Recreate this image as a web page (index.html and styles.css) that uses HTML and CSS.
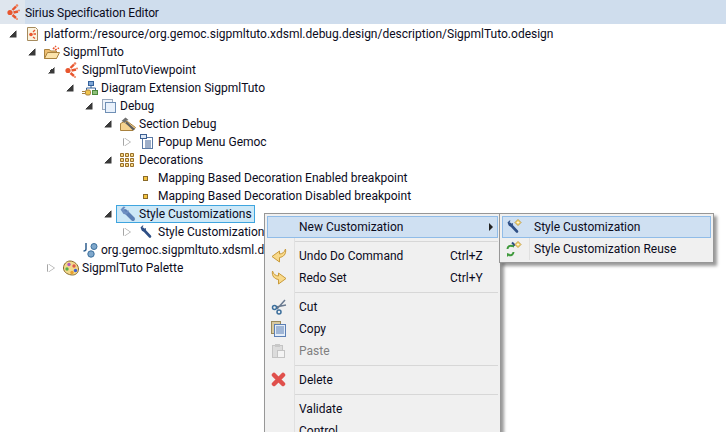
FILE: index.html
```html
<!DOCTYPE html>
<html lang="en">

<head>
    <meta charset="UTF-8">
    <meta name="viewport" content="width=device-width, initial-scale=1.0">
    <title>Sirius Specification Editor</title>
    <link rel="stylesheet" href="styles.css">
</head>
<body>
    <svg class="defs" width="0" height="0">
        <defs>
            <g id="sirius">
                <circle cx="5" cy="8.500" r="2.600" fill="#e8562e"/>
                <path d="M7.500 6l3.500-3.500M8.500 8.500l4.500-1M7.500 11l3.500 3" stroke="#e8562e" stroke-width="2.400" fill="none"/>
                <circle cx="12" cy="1.500" r="1.300" fill="#f0805c"/>
                <circle cx="14" cy="6.500" r="1" fill="#f0805c"/>
                <circle cx="12" cy="15" r="1" fill="#f0805c"/>
            </g>
            <g id="wrench">
                <path d="M4 5l7 7.500" stroke="#2f4f85" stroke-width="2.600" stroke-linecap="round"/>
                <path d="M1.500 3.500l2-2 1 0-1 2 1.500 1.500 2-1v1.500l-2 2-2-.5z" fill="#2f4f85"/>
            </g>
            <g id="sparkle">
                <path d="M12 .5l3 3-3 3-3-3z" fill="#f8dc80" stroke="#b98a1e" stroke-width=".8"/>
                <circle cx="12" cy="3.500" r=".8" fill="#fff"/>
            </g>
        </defs>
    </svg>

    <header class="titleBar">
        <span class="titleTab">
            <svg width="16" height="16" viewBox="0 0 16 16"><use href="#sirius"/></svg>
        </span>
        <span class="titleText">Sirius Specification Editor</span>
    </header>

    <main class="tree">
        <div class="row depth0">
            <span class="twist open"></span>
            <svg class="icon" width="16" height="16" viewBox="0 0 16 16">
                <path d="M2.500 1.500h8l2 2v11h-10z" fill="#fbf3df" stroke="#a58a5c"/>
                <circle cx="6" cy="8.500" r="1.800" fill="#e8562e"/>
                <path d="M8 6l2-2M8.500 8h2.500M8 11l2 1.500" stroke="#e8562e" stroke-width="1.300"/>
            </svg>
            <span class="label">platform:/resource/org.gemoc.sigpmltuto.xdsml.debug.design/description/SigpmlTuto.odesign</span>
        </div>
        <div class="row depth1">
            <span class="twist open"></span>
            <svg class="icon" width="16" height="16" viewBox="0 0 16 16">
                <path d="M.5 5.500h5l1 1.500h6v7.500H.5z" fill="#eebf72" stroke="#a9823f"/>
                <path d="M.5 14.500l3-6h12l-3 6z" fill="#fbe3ab" stroke="#a9823f"/>
                <path d="M9 5l3-3M11 6l4-2" stroke="#e8562e" stroke-width="1.600" stroke-dasharray="2 1"/>
            </svg>
            <span class="label">SigpmlTuto</span>
        </div>
        <div class="row depth2">
            <span class="twist open"></span>
            <svg class="icon" width="16" height="16" viewBox="0 0 16 16"><use href="#sirius"/></svg>
            <span class="label">SigpmlTutoViewpoint</span>
        </div>
        <div class="row depth3">
            <span class="twist open"></span>
            <svg class="icon" width="16" height="16" viewBox="0 0 16 16">
                <rect x="6.500" y="1.500" width="5" height="4" fill="#7fa6d6" stroke="#35629c"/>
                <path d="M9 5.500v2.500M4.500 10V8h9v2" stroke="#35629c" fill="none"/>
                <rect x="10.500" y="10.500" width="5" height="4" fill="#8ec07a" stroke="#4d8a3c"/>
                <rect x="3.500" y="10" width="5" height="5" rx="1.500" fill="#f0c44c" stroke="#a9823f"/>
                <path d="M0 11.500h3.500M0 13.500h3.500" stroke="#a9823f"/>
            </svg>
            <span class="label">Diagram Extension SigpmlTuto</span>
        </div>
        <div class="row depth4">
            <span class="twist open"></span>
            <svg class="icon" width="16" height="16" viewBox="0 0 16 16">
                <rect x="1.500" y="1.500" width="10" height="10" fill="#eef3fa" stroke="#9aa9bd"/>
                <rect x="4.500" y="4.500" width="10" height="10" fill="#e9f1fb" stroke="#6f8fb5"/>
            </svg>
            <span class="label">Debug</span>
        </div>
        <div class="row depth5">
            <span class="twist open"></span>
            <svg class="icon" width="16" height="16" viewBox="0 0 16 16">
                <path d="M.5 14.500V7.500l4-2h3l8 6-2.500 3z" fill="#f5d28f" stroke="#a9823f"/>
                <path d="M5 7l4 3.500 4 4 2-1.500-4.500-4L7 5.500z" fill="#5f5f5f"/>
                <path d="M1.500 5l4-3.500 3 2.500-2.500 1-1.500 2-1-1z" fill="#6f6f6f"/>
            </svg>
            <span class="label">Section Debug</span>
        </div>
        <div class="row depth6">
            <span class="twist closed"></span>
            <svg class="icon" width="16" height="16" viewBox="0 0 16 16">
                <rect x="3.500" y="3.500" width="10" height="11" fill="#fff" stroke="#5b7aa5"/>
                <rect x="1.500" y=".5" width="6" height="4" fill="#dce7f5" stroke="#3c5f92"/>
                <path d="M6 7h6M6 9h6M6 11h6M6 13h6" stroke="#3c5f92"/>
            </svg>
            <span class="label">Popup Menu Gemoc</span>
        </div>
        <div class="row depth5">
            <span class="twist open"></span>
            <svg class="icon" width="16" height="16" viewBox="0 0 16 16">
                <path d="M.5 1.500h3v3h-3zM5.500 1.500h3v3h-3zM10.500 1.500h3v3h-3zM.5 6.500h3v3h-3zM5.500 6.500h3v3h-3zM10.500 6.500h3v3h-3zM.5 11.500h3v3h-3zM5.500 11.500h3v3h-3zM10.500 11.500h3v3h-3z" fill="#f6d784" stroke="#99702a"/>
            </svg>
            <span class="label">Decorations</span>
        </div>
        <div class="row depth6">
            <span class="twist"></span>
            <svg class="icon" width="16" height="16" viewBox="0 0 16 16"><rect x="4.500" y="6.500" width="4" height="4" fill="#f4c542" stroke="#8a6a2a"/></svg>
            <span class="label">Mapping Based Decoration Enabled breakpoint</span>
        </div>
        <div class="row depth6">
            <span class="twist"></span>
            <svg class="icon" width="16" height="16" viewBox="0 0 16 16"><rect x="4.500" y="6.500" width="4" height="4" fill="#f4c542" stroke="#8a6a2a"/></svg>
            <span class="label">Mapping Based Decoration Disabled breakpoint</span>
        </div>
        <div class="row depth5">
            <span class="twist open"></span>
            <div class="selected">
                <svg class="icon" width="16" height="16" viewBox="0 0 16 16">
                    <path d="M5 5l8 8" stroke="#5b7fb5" stroke-width="4" stroke-linecap="round"/>
                    <path d="M.5 3.500l3-3 2 .5-2 2.500 2.500 2.500 2.500-2v2.500l-2 2-3-.5z" fill="#6d8fc2"/>
                </svg>
                <span class="label">Style Customizations</span>
            </div>
        </div>
        <div class="row depth6">
            <span class="twist closed"></span>
            <svg class="icon" width="16" height="16" viewBox="0 0 16 16"><use href="#wrench"/></svg>
            <span class="label">Style Customization</span>
        </div>
        <div class="row depth3">
            <span class="twist"></span>
            <svg class="icon" width="16" height="16" viewBox="0 0 16 16">
                <circle cx="12" cy="4.500" r="3" fill="#7fa8cc" stroke="#3c6f9c"/>
                <circle cx="9" cy="12" r="3.200" fill="#7fa8cc" stroke="#3c6f9c"/>
                <path d="M4 1v6c0 1.500-1 2-2.500 2" stroke="#2f5f8f" stroke-width="1.500" fill="none"/>
            </svg>
            <span class="label">org.gemoc.sigpmltuto.xdsml.d</span>
        </div>
        <div class="row depth2">
            <span class="twist closed"></span>
            <svg class="icon" width="16" height="16" viewBox="0 0 16 16">
                <path d="M7 1c4.500 0 8.500 4 8.500 8 0 4-3 6-6 6-3.500 0-9-2-9-7 0-4 3-7 6.500-7z" fill="#f2d98c" stroke="#8a6a2a"/>
                <circle cx="6" cy="4.500" r="1.700" fill="#b35ac0"/>
                <circle cx="11" cy="6" r="1.700" fill="#e05a4a"/>
                <circle cx="4" cy="9" r="1.700" fill="#58b04a"/>
                <circle cx="12.500" cy="10.500" r="1.700" fill="#3c5fd0"/>
                <circle cx="9" cy="12.500" r="1.700" fill="#e8a030"/>
            </svg>
            <span class="label">SigpmlTuto Palette</span>
        </div>
    </main>

    <nav class="menu contextMenu">
        <div class="menuItem hot"><span class="menuIcon"></span><span class="menuText">New Customization</span><span class="submenuArrow"></span></div>
        <div class="menuSep"></div>
        <div class="menuItem"><span class="menuIcon">
            <svg width="16" height="16" viewBox="0 0 16 16"><path d="M14.500 1c1 5-2 8-6 8.500V14L1 8.500l7.500-5.500v3c2.500 0 5-1.500 6-5z" fill="#f8d98a" stroke="#c99a3a"/></svg>
        </span><span class="menuText">Undo Do Command</span><span class="menuKey">Ctrl+Z</span></div>
        <div class="menuItem"><span class="menuIcon">
            <svg width="16" height="16" viewBox="0 0 16 16"><path d="M1.500 1c-1 5 2 8 6 8.500V14L15 8.500 7.500 3v3c-2.500 0-5-1.500-6-5z" fill="#f8d98a" stroke="#c99a3a"/></svg>
        </span><span class="menuText">Redo Set</span><span class="menuKey">Ctrl+Y</span></div>
        <div class="menuSep"></div>
        <div class="menuItem"><span class="menuIcon">
            <svg width="16" height="16" viewBox="0 0 16 16"><path d="M14 1L6 10M15 6L5 8" stroke="#6a7a90" stroke-width="1.500"/><circle cx="3.500" cy="8.500" r="2" fill="none" stroke="#3c6f9c" stroke-width="1.500"/><circle cx="8" cy="13" r="2" fill="none" stroke="#3c6f9c" stroke-width="1.500"/></svg>
        </span><span class="menuText">Cut</span></div>
        <div class="menuItem"><span class="menuIcon">
            <svg width="16" height="16" viewBox="0 0 16 16"><rect x=".5" y=".5" width="9" height="12" fill="#d8c9a0" stroke="#9a8a5c"/><rect x="3.500" y="3.500" width="11" height="12" fill="#e4edf7" stroke="#5b7fb5"/><path d="M5 6h8M5 8h8M5 10h8M5 12h8" stroke="#5b7fb5"/></svg>
        </span><span class="menuText">Copy</span></div>
        <div class="menuItem disabled"><span class="menuIcon">
            <svg width="16" height="16" viewBox="0 0 16 16"><rect x="1.500" y="2.500" width="10" height="12" fill="#dcdcdc" stroke="#c4c4c4"/><rect x="4" y="1" width="5" height="3" fill="#c8c8c8"/><rect x="6.500" y="7.500" width="7" height="7" fill="#f4f4f4" stroke="#c4c4c4"/></svg>
        </span><span class="menuText">Paste</span></div>
        <div class="menuSep"></div>
        <div class="menuItem"><span class="menuIcon">
            <svg width="16" height="16" viewBox="0 0 16 16"><path d="M3 3l9 9M12 3l-9 9" stroke="#e0504c" stroke-width="4.500" stroke-linecap="round"/></svg>
        </span><span class="menuText">Delete</span></div>
        <div class="menuSep"></div>
        <div class="menuItem"><span class="menuIcon"></span><span class="menuText">Validate</span></div>
        <div class="menuItem"><span class="menuIcon"></span><span class="menuText">Control</span></div>
    </nav>

    <nav class="menu subMenu">
        <div class="menuItem hot"><span class="menuIcon">
            <svg width="16" height="16" viewBox="0 0 16 16"><use href="#wrench"/><use href="#sparkle"/></svg>
        </span><span class="menuText">Style Customization</span></div>
        <div class="menuItem"><span class="menuIcon">
            <svg width="16" height="16" viewBox="0 0 16 16"><path d="M1.500 8a3.500 3.500 0 0 1 5-3M7.500 11a3.500 3.500 0 0 1-5 3" stroke="#3f9a3c" stroke-width="2" fill="none"/><path d="M8 2.500v4l-3-1zM1 16v-4l3 1z" fill="#3f9a3c"/><path d="M6 1.500l3 3" stroke="#2f4f85" stroke-width="2"/><use href="#sparkle"/></svg>
        </span><span class="menuText">Style Customization Reuse</span></div>
    </nav>
</body>

</html>
```

FILE: styles.css
```css
* {
    margin: 0;
    padding: 0;
    box-sizing: border-box;
}

html, body {
    height: 432px;
    overflow: hidden;
}

body {
    position: relative;
    background-color: #fff;
    color: #0b0b1c;
    font-family: Roboto, "Noto Sans", sans-serif;
    font-size: 12px;
}

.defs {
    position: absolute;
}

.titleBar {
    display: flex;
    align-items: center;
    height: 24px;
    margin-bottom: 1px;
    background-color: #cfdded;
}

.titleTab {
    display: flex;
    align-items: center;
    justify-content: center;
    width: 25px;
    height: 24px;
    background-color: #dfe6ee;
}

.titleText {
    padding-top: 2px;
    letter-spacing: -.1px;
}

.row {
    display: flex;
    align-items: center;
    height: 18px;
}

.depth0 { padding-left: 8px; }
.depth1 { padding-left: 27px; }
.depth2 { padding-left: 46px; }
.depth3 { padding-left: 65px; }
.depth4 { padding-left: 84px; }
.depth5 { padding-left: 103px; }
.depth6 { padding-left: 122px; }

.twist {
    flex: none;
    width: 10px;
    height: 10px;
    margin-right: 7px;
}

.twist.open {
    background: linear-gradient(135deg, transparent 50%, #3a3a3a 50%);
    transform: scale(.7);
}

.twist.closed {
    width: 0;
    height: 0;
    margin-left: 2px;
    margin-right: 9px;
    border-left: 6px solid #fff;
    border-top: 4.500px solid transparent;
    border-bottom: 4.500px solid transparent;
    filter: drop-shadow(1px 0 0 #a5a5a5) drop-shadow(-1px 0 0 #a5a5a5);
}

.icon {
    flex: none;
    margin-right: 3px;
}

.label {
    white-space: nowrap;
}

.selected {
    display: flex;
    align-items: center;
    height: 18px;
    margin-left: -4px;
    padding: 0 2px 0 3px;
    background-color: #cde8f7;
    border: 1px solid #3fa5df;
}

.menu {
    position: absolute;
    background-color: #f0f0f0;
    border: 1px solid #979797;
    box-shadow: 3px 3px 3px rgba(0, 0, 0, .4);
    padding: 2px;
}

.contextMenu {
    left: 264px;
    top: 213px;
    width: 237px;
    height: 240px;
}

.subMenu {
    left: 499px;
    top: 213px;
    width: 215px;
}

.menu::before {
    content: "";
    position: absolute;
    top: 2px;
    bottom: 2px;
    left: 29px;
    width: 1px;
    background-color: #e0e0e0;
}

.menuItem {
    position: relative;
    display: flex;
    align-items: center;
    height: 22px;
}

.menuItem.hot {
    background-color: #cfe0f2;
    box-shadow: inset 0 0 0 1px #90bce8;
}

.menuIcon {
    flex: none;
    display: flex;
    align-items: center;
    width: 32px;
    padding-left: 4px;
}

.menuText {
    flex: 1;
    white-space: nowrap;
}

.menuKey {
    width: 48px;
    white-space: nowrap;
}

.disabled {
    color: #808080;
}

.menuSep {
    position: relative;
    height: 1px;
    margin: 3px 0 3px 28px;
    background-color: #d7d7d7;
}

.submenuArrow {
    width: 0;
    height: 0;
    margin-right: 5px;
    border-left: 4px solid #222;
    border-top: 4px solid transparent;
    border-bottom: 4px solid transparent;
}
```
